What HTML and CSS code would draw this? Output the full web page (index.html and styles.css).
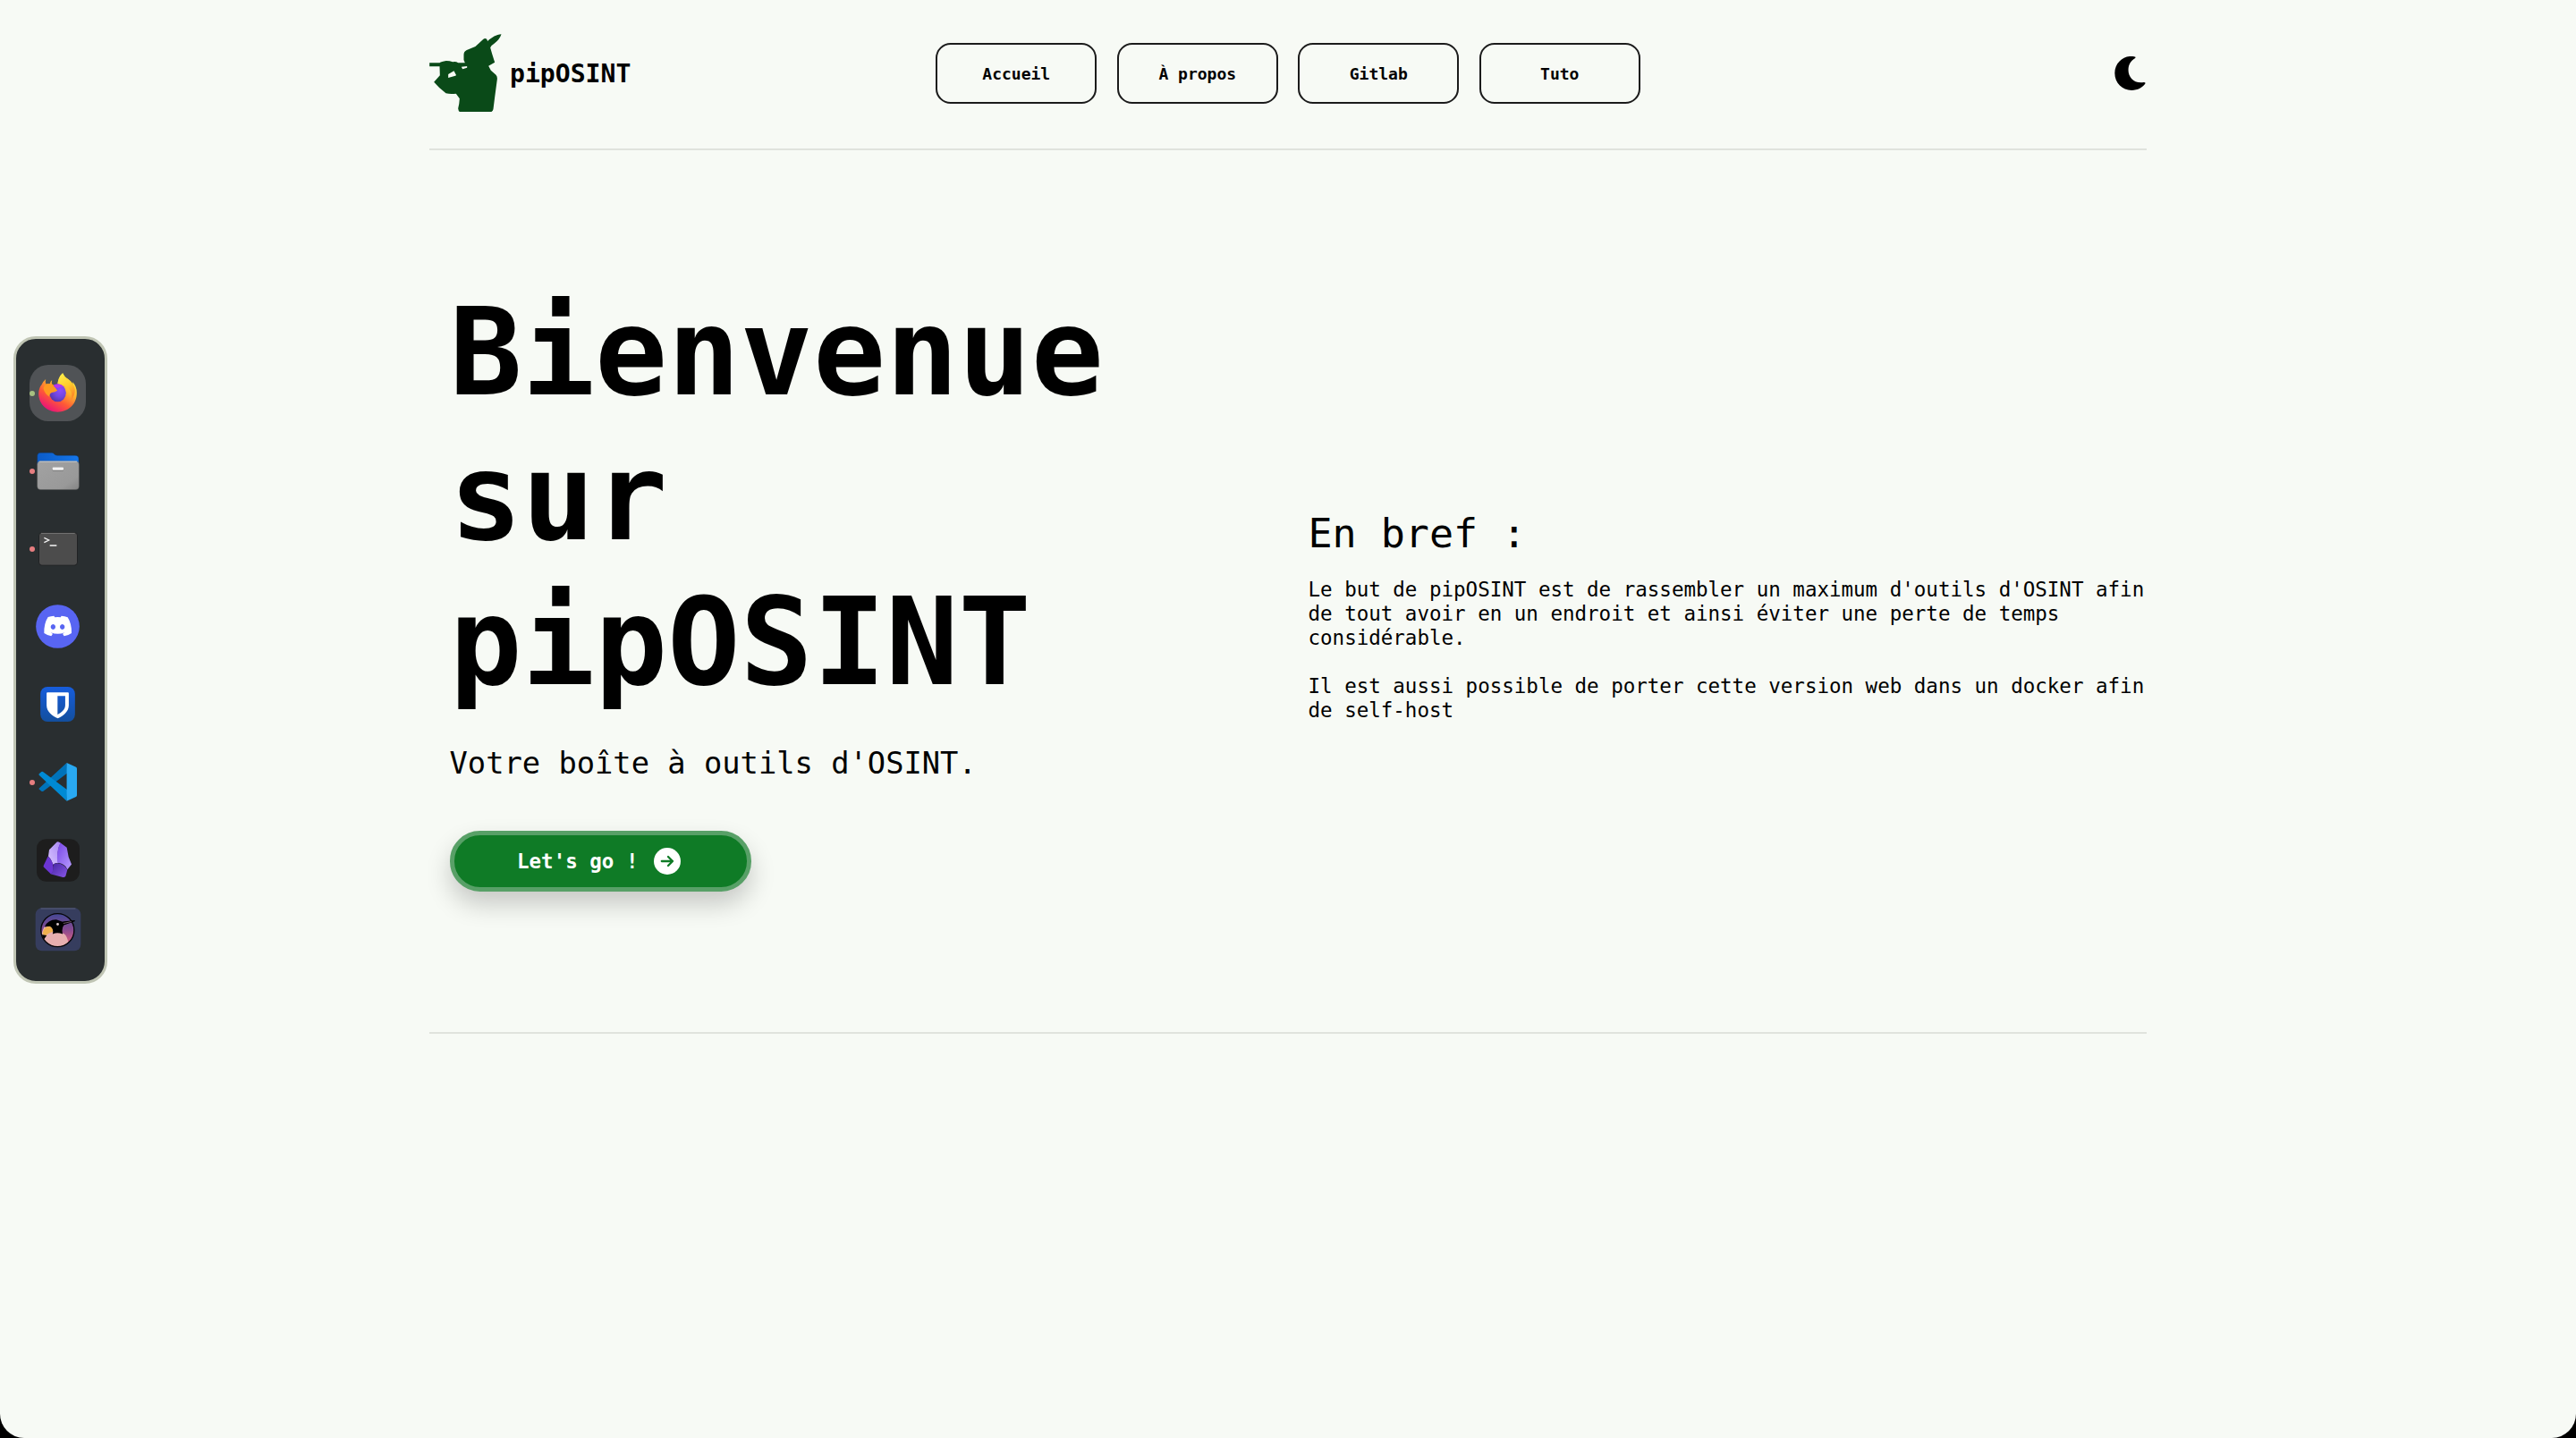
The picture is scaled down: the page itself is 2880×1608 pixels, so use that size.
FILE: index.html
```html
<!DOCTYPE html>
<html lang="fr">
<head>
<meta charset="utf-8">
<title>pipOSINT</title>
<link rel="stylesheet" href="styles.css">
</head>
<body>
<div class="page">
  <header class="header">
    <a class="brand">
      <svg class="brand-logo" viewBox="30 53 242 261"><path fill="#0a4a18" fill-rule="evenodd" d="M271 54C254 55 240 64 225 77L222 70Q216 66 210 71L184 95L155 107Q145 112 145 122V140L149 150H126Q118 144 108 147Q98 143 86 143Q70 145 64 150H30V162H64L65 192L45 214Q62 234 85 252Q100 256 119 253L131 270Q130 290 126 303Q127 312 131 314H238Q243 311 244 305L249 265L257 205Q258 195 253 190L236 175L228 160L249 148L240 120L234 99Q238 90 247 85Q265 73 271 54ZM93 188L112 177L120 192L93 200ZM137 163L156 161V166L141 171Z"/></svg>
      <span>pipOSINT</span>
    </a>
    <nav class="nav">
      <a class="nav-link">Accueil</a>
      <a class="nav-link">À propos</a>
      <a class="nav-link">Gitlab</a>
      <a class="nav-link">Tuto</a>
    </nav>
    <svg class="moon" viewBox="73 38 104 115"><path d="M143 40C112 30 73 54 73 95C73 129 99 153 130 153C151 153 168 143 177 129Q176 126 171 126C137 131 119 108 119 84C119 66 127 53 142 44Q144 42 143 40Z"/></svg>
  </header>

  <main class="hero">
    <section class="intro">
      <h1>Bienvenue<br>sur<br>pipOSINT</h1>
      <p class="tagline">Votre boîte à outils d'OSINT.</p>
      <a class="cta">
        <span>Let's go !</span>
        <svg class="cta-icon" viewBox="0 0 30 30"><circle cx="15" cy="15" r="15" fill="#fff"/><path d="M8.800 15H21M16 10l5 5-5 5" fill="none" stroke="#0f7b26" stroke-width="2.300" stroke-linecap="round" stroke-linejoin="round"/></svg>
      </a>
    </section>
    <section class="brief">
      <h2>En bref :</h2>
      <p>Le but de pipOSINT est de rassembler un maximum d'outils d'OSINT afin de tout avoir en un endroit et ainsi éviter une perte de temps considérable.</p>
      <p>Il est aussi possible de porter cette version web dans un docker afin de self-host</p>
    </section>
  </main>
</div>

<aside class="dock">
  <div class="dock-item dock-active">
    <svg class="dock-firefox" viewBox="130 170 128 132">
      <defs>
        <linearGradient id="fxBody" x1=".85" y1=".1" x2=".3" y2="1"><stop offset="0" stop-color="#fff044"/><stop offset=".35" stop-color="#ffb52e"/><stop offset=".65" stop-color="#ff5a36"/><stop offset="1" stop-color="#e9107b"/></linearGradient>
        <linearGradient id="fxTail" x1="0" y1="0" x2=".4" y2="1"><stop offset="0" stop-color="#fff44f"/><stop offset=".6" stop-color="#ffca2c"/><stop offset="1" stop-color="#ff8b28"/></linearGradient>
        <radialGradient id="fxGlobe" cx=".65" cy=".35" r=".75"><stop offset="0" stop-color="#8d4cff"/><stop offset=".5" stop-color="#7147e0"/><stop offset="1" stop-color="#5033a5"/></radialGradient>
      </defs>
      <path fill="url(#fxBody)" d="M154 191Q151 200 155 208Q163 205 168 206Q169 198 175 194Q172 204 176 210L193 215L195 200Q199 181 211 171Q216 184 230 192Q241 199 244 210Q246 203 243 199Q258 213 258 237C258 276 229 301 194 301C158 301 130 274 130 239Q131 220 140 210Q146 197 154 191Z"/>
      <path fill="url(#fxTail)" d="M211 171Q216 184 230 192Q247 203 252 226Q252 247 238 263Q247 240 232 223Q218 208 193 210Q196 183 211 171Z"/>
      <ellipse cx="194" cy="237" rx="28" ry="30" fill="url(#fxGlobe)"/>
      <path fill="#ff9a20" d="M146 222Q150 205 164 206Q178 206 183 216L193 229Q185 235 174 236Q166 239 166 250Q150 240 146 222Z"/>
      <path fill="#b935ed" d="M180 211Q199 201 216 217Q204 216 194 221L183 217Z"/>
    </svg>
  </div>
  <div class="dock-item dock-running">
    <svg class="dock-files" viewBox="122 437 144 128">
      <defs><linearGradient id="folderBlue"><stop offset="0" stop-color="#0b5bc8"/><stop offset="1" stop-color="#1577ea"/></linearGradient><linearGradient id="folderGrey" x2="1" y2="1"><stop offset="0" stop-color="#a2a2a2"/><stop offset=".75" stop-color="#999"/><stop offset="1" stop-color="#848484"/></linearGradient></defs>
      <path fill="url(#folderBlue)" stroke="#173255" stroke-width="1.500" d="M124 480V450Q125 440 134 440H173Q178 440 181 445Q184 449 191 449H250Q263 449 263 460V480Z"/>
      <rect x="124" y="469" width="140" height="95" rx="11" fill="url(#folderGrey)" stroke="#555"/>
      <path d="M130 470H257" stroke="#d0d0d0" stroke-width="3"/>
      <rect x="175" y="490" width="37" height="12" rx="3" fill="#777"/><rect x="175" y="489" width="37" height="10" rx="3" fill="#f2f2f2"/>
    </svg>
  </div>
  <div class="dock-item dock-running">
    <svg class="dock-terminal" viewBox="128 704 132 114"><rect x="129.500" y="705.500" width="129" height="110" rx="10" fill="#4c4c4c" stroke="#202224" stroke-width="3"/><path d="M137 708H250" stroke="#777" stroke-width="3"/><path d="M147 723L163 731L147 739M166 749H189" fill="none" stroke="#f4f4f4" stroke-width="4"/></svg>
  </div>
  <div class="dock-item">
    <svg class="dock-discord" viewBox="120 108 147 147"><circle cx="193.500" cy="181.500" r="73" fill="#5865f2"/><path fill="#fff" fill-rule="evenodd" d="M161 150Q171 147 181 146L184 151Q194 149 203 151L206 146Q217 147 227 151Q241 173 240 204Q229 212 215 214L210 206L217 202Q194 211 170 202L177 206L172 214Q158 211 148 204Q147 172 161 150ZM178 174A8 9 0 1 0 178.100 174ZM209 174A8 9 0 1 0 209.100 174Z"/></svg>
  </div>
  <div class="dock-item">
    <svg class="dock-bitwarden" viewBox="135 383 117 118"><defs><linearGradient id="shieldBg" x2="0" y2="1"><stop offset="0" stop-color="#175ddc"/><stop offset="1" stop-color="#134f9e"/></linearGradient></defs><rect x="135" y="383" width="117" height="118" rx="24" fill="url(#shieldBg)"/><path fill="#fff" fill-rule="evenodd" d="M159 402H228Q231 402 231 405V446C231 468 211 482 194 490C176 482 156 468 156 446V405Q156 402 159 402ZM193 414V477C208 469 219 459 219 445V414Z"/></svg>
  </div>
  <div class="dock-item dock-running">
    <svg class="dock-vscode" viewBox="130 -20 128 128"><path fill="#0073ba" d="M133 64L224 -20L226 14L147 74Q143 77 139 74L132 68Q130 66 133 64Z"/><path fill="#008ad4" d="M132 21Q130 18 133 16L140 10Q143 8 147 11L226 70L224 107Z"/><path fill="#29a9f2" d="M224 -20L255 -6Q258 -4 258 0V88Q258 92 255 93L224 107Z"/></svg>
  </div>
  <div class="dock-item">
    <svg class="dock-obsidian" viewBox="122 234 144 143"><rect x="122" y="234" width="144" height="143" rx="31" fill="#1d1d1d"/><defs><linearGradient id="gemLight" x1="0" y1="1" x2="1" y2="0"><stop offset="0" stop-color="#d8c5ff"/><stop offset="1" stop-color="#a987f4"/></linearGradient><linearGradient id="gemSide" x2="1" y2="1"><stop offset="0" stop-color="#7744e6"/><stop offset="1" stop-color="#b79cff"/></linearGradient><linearGradient id="gemBase" x2="1" y2="1"><stop offset="0" stop-color="#4525a0"/><stop offset="1" stop-color="#8856e8"/></linearGradient></defs><path fill="url(#gemLight)" d="M190 244Q196 241 202 248Q188 275 194 315Q184 313 177 320Q172 302 161 292L164 270Z"/><path fill="url(#gemSide)" d="M201 246L223 263L229 294L239 319L225 336Q216 316 192 314Q187 277 201 246Z"/><path fill="#6b35d2" d="M160 292Q177 307 178 329Q179 346 170 352L146 329Q143 326 146 321Z"/><path fill="url(#gemBase)" d="M178 318Q195 312 210 321Q219 326 225 337L219 359Q215 364 207 362L170 352Q180 338 178 318Z"/></svg>
  </div>
  <div class="dock-item dock-last">
    <svg class="dock-bird" viewBox="116 467 155 148">
      <defs><linearGradient id="skyDusk" x2="0" y2="1"><stop offset="0" stop-color="#444895"/><stop offset=".5" stop-color="#8b4b91"/><stop offset="1" stop-color="#ee6578"/></linearGradient><clipPath id="birdDisc"><circle cx="191.500" cy="543" r="55"/></clipPath></defs>
      <rect x="117" y="468" width="153" height="145" rx="22" fill="#363d5e"/><path d="M136 470H251" stroke="#5a607c" stroke-width="3" stroke-linecap="round"/>
      <circle cx="191.500" cy="543" r="55" fill="url(#skyDusk)"/>
      <g clip-path="url(#birdDisc)"><path fill="#e7afb0" d="M135 610V560L146 533L172 530L180 553Q197 548 214 555Q224 563 228 585V610Z"/><path fill="#efb04f" d="M141 555Q145 531 165 529Q178 535 176 548Q160 553 150 563Z"/><path d="M148 531Q158 508 187 507L211 515L250 510L213 525Q204 538 209 556Q190 549 175 556Q180 538 165 530ZM133 557L155 561L145 575Z"/></g>
      <circle cx="191.500" cy="543" r="56" fill="none" stroke="#070609" stroke-width="4"/><path d="M209 514L250 509V513L212 526Z"/><path d="M211 520L238 514" stroke="#a8849b" stroke-width="2"/><circle cx="192" cy="523" r="4.500" fill="#d9c5c7"/>
    </svg>
  </div>
</aside>
</body>
</html>
```
FILE: styles.css
```css
* { box-sizing: border-box; }

html {
  background: #000;
  font-size: 22.5px;
}

body {
  margin: 0;
  height: 1608px;
  overflow: hidden;
  border-radius: 0 0 27px 27px;
  background: #f7faf5;
  color: #000;
  font-family: "DejaVu Sans Mono", monospace;
  line-height: 1.2;
}

h1, h2, p { margin: 0; font-weight: 400; }

.page {
  width: 1920px;
  margin: 0 auto;
}

.header {
  display: grid;
  grid-template-columns: 1fr auto 1fr;
  align-items: center;
  height: 168px;
  padding-bottom: 2px;
  border-bottom: 2px solid #e0e3dd;
}

.brand {
  display: flex;
  align-items: center;
  gap: 9px;
  font-size: 1.25rem;
  font-weight: 700;
}

.brand span { padding-top: 2px; }

.brand-logo {
  width: 81px;
  height: 87px;
  margin-bottom: 2px;
}

.nav { display: flex; gap: 1rem; }

.nav-link {
  display: flex;
  align-items: center;
  justify-content: center;
  width: 8rem;
  height: 3rem;
  padding-top: 1px;
  border: 2px solid #1b1b1b;
  border-radius: .75rem;
  font-size: .8rem;
  font-weight: 700;
}

.moon {
  justify-self: end;
  width: 35px;
  height: 38px;
  margin-right: 1px;
}

.hero {
  display: grid;
  grid-template-columns: 1fr 1fr;
  height: 988px;
  border-bottom: 2px solid #e0e3dd;
}

.intro { padding: 146px 0 0 1rem; }

h1 {
  font-size: 6rem;
  font-weight: 700;
}

.tagline {
  margin-top: 1.5rem;
  font-size: 1.5rem;
}

.cta {
  display: flex;
  align-items: center;
  justify-content: center;
  gap: 18px;
  width: 15rem;
  height: 3rem;
  margin-top: 55px;
  padding-right: 3px;
  border: 5px solid #58a067;
  border-radius: 1.5rem;
  background: #0f7b26;
  box-shadow: 0 14px 28px rgba(0, 0, 0, .2);
  color: #fff;
  font-weight: 700;
}

.cta-icon { width: 30px; height: 30px; }

.brief { padding: 402px 0 0 1rem; }

.brief h2 { font-size: 2rem; }

.brief p { margin-top: 21.5px; }

.brief p + p { margin-top: 27px; }

/* Launcher floating over the page */
.dock {
  position: absolute;
  top: 376px;
  left: 15px;
  display: flex;
  flex-direction: column;
  width: 105px;
  height: 724px;
  padding: 17px 0 0 15px;
  border: 3px solid #c0c5b4;
  border-radius: 25px;
  background: #292e30;
}

.dock-item {
  position: relative;
  display: flex;
  flex: none;
  align-items: center;
  justify-content: center;
  width: 63px;
  height: 87px;
}

.dock-last { height: 69px; }

.dock-active::before {
  content: "";
  position: absolute;
  inset: 12px 0;
  border-radius: 21px;
  background: #505356;
}

.dock-active::after,
.dock-running::after {
  content: "";
  position: absolute;
  top: 41px;
  left: 0;
  width: 6px;
  height: 6px;
  border-radius: 50%;
  background: #e67e80;
}

.dock-active::after { background: #a7c080; }

.dock svg { position: relative; }

.dock .dock-firefox { width: 43px; height: 44px; margin-bottom: 2px; }
.dock-files { width: 48px; height: 43px; }
.dock-terminal { width: 44px; height: 38px; }
.dock-discord { width: 49px; height: 49px; }
.dock-bitwarden { width: 39px; height: 39px; }
.dock-vscode { width: 43px; height: 43px; }
.dock-obsidian { width: 48px; height: 48px; }
.dock-bird { width: 52px; height: 49px; }
```
